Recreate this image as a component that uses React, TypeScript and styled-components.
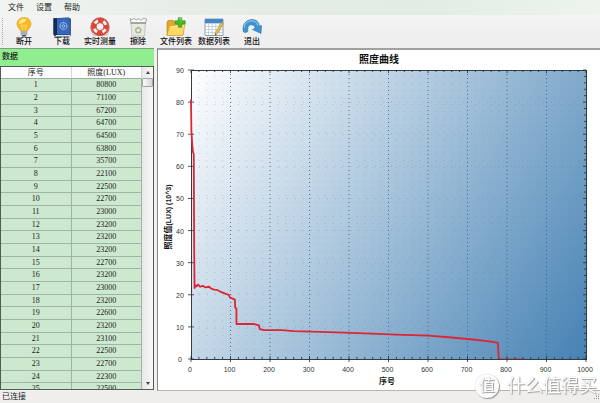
import React from 'react';
import styled, { createGlobalStyle } from 'styled-components';

const GlobalStyle = createGlobalStyle`
  * { box-sizing: border-box; }
  body {
    margin: 0;
    background: #f0f0f0;
    color: #1c1c1c;
    font-family: "Liberation Sans", "Noto Sans CJK SC", sans-serif;
    font-size: 8px;
    line-height: 10px;
  }
`;

const Window = styled.div`
  display: flex;
  flex-direction: column;
  height: 100vh;
  overflow: hidden;
`;

const MenuBar = styled.nav`
  flex: none;
  display: flex;
  align-items: center;
  gap: 12px;
  height: 15px;
  padding: 0 8px;
  background: linear-gradient(90deg, #f1f4f1, #e6ede7 30%, #e3ebe5 70%, #edf4ee);
`;

const MenuItem = styled.button`
  padding: 0;
  border: 0;
  background: none;
  color: inherit;
  font: inherit;
`;

const ToolBar = styled.div`
  flex: none;
  display: flex;
  height: 33px;
  background: linear-gradient(#f3f4f3, #efefef 60%);
`;

const Grip = styled.div`
  width: 2px;
  margin: 3px 1px 3px 2px;
  border-left: 1px dotted #a9a9a9;
`;

const ToolButton = styled.button`
  display: flex;
  flex-direction: column;
  align-items: center;
  width: 38px;
  padding: 2px 0 0;
  border: 0;
  background: none;
  color: #111;
  font: inherit;
  font-weight: 500;
  white-space: nowrap;

  svg {
    display: block;
    width: 20px;
    height: 20px;
  }
`;

const Main = styled.main`
  flex: 1;
  min-height: 0;
  display: flex;
  gap: 3px;
`;

const SidePanel = styled.section`
  flex: none;
  display: flex;
  flex-direction: column;
  width: 154px;
  border-top: 1px solid #7f9f7f;
`;

const PanelTitle = styled.h2`
  flex: none;
  height: 17px;
  margin: 0;
  padding: 3px 2px;
  background: #90ee90;
  font-size: 8px;
  font-weight: 500;
  line-height: 10px;
`;

const GridFrame = styled.div`
  flex: 1;
  min-height: 0;
  display: flex;
  margin-bottom: 1px;
  overflow: hidden;
  border: 1px solid #555a57;
  background: #f0f0f0;
`;

const TableClip = styled.div`
  flex: 1;
  overflow: hidden;
`;

const DataTable = styled.table`
  width: 100%;
  table-layout: fixed;
  border-collapse: separate;
  border-spacing: 0;
  font-family: "Liberation Serif", "Noto Sans CJK SC", serif;
  text-align: center;

  tbody tr:nth-child(3n) td { height: 12px; }
`;

const HeadCell = styled.th`
  height: 12px;
  padding: 0;
  border-right: 1px solid #d4d8d4;
  border-bottom: 1px solid #9aaf9f;
  background: #fbfcfb;
  font-weight: 400;
`;

const Cell = styled.td`
  height: 13px;
  padding: 0;
  border-right: 1px solid #9db5a2;
  border-bottom: 1px solid #9db5a2;
  background: #cce8cf;
`;

const ScrollTrack = styled.div`
  flex: none;
  display: flex;
  flex-direction: column;
  width: 11px;
  background: linear-gradient(90deg, #e6e8e6, #f7f7f7);
`;

const ScrollButton = styled.button`
  display: grid;
  place-items: center;
  height: 11px;
  padding: 0;
  border: 0;
  background: none;

  svg {
    width: 4px;
    height: 3px;
  }
`;

const Thumb = styled.div`
  flex: none;
  height: 9px;
  border: 1px solid #a5a8a6;
  border-radius: 1px;
  background: linear-gradient(90deg, #fafafa, #d4d6d5);
`;

const ThumbSpace = styled.div`
  flex: 1;
`;

const ChartPanel = styled.section`
  flex: 1;
  min-width: 0;
  border-top: 2px solid #a0a0a0;
  border-left: 1px solid #868686;
  border-bottom: 1px solid #b5b5b5;
  background: #fff;

  svg {
    display: block;
    width: 100%;
    height: 100%;
  }
`;

const ChartText = styled.text<{ $bold?: boolean; $size?: number }>`
  fill: ${(p) => (p.$bold ? '#111' : '#333')};
  font-size: ${(p) => p.$size ?? 7}px;
  font-weight: ${(p) => (p.$bold ? 700 : 400)};
  text-anchor: middle;
`;

const StatusBar = styled.footer`
  flex: none;
  display: flex;
  align-items: center;
  justify-content: space-between;
  height: 12px;
  padding: 0 0 0 2px;
  background: #f0eeed;

  svg {
    width: 8px;
    height: 8px;
  }
`;

const Watermark = styled.div`
  position: fixed;
  right: 3px;
  bottom: 5px;
  display: flex;
  align-items: center;
  gap: 8px;
  color: #fff;
  font-size: 18px;
  line-height: 24px;
  text-shadow: 1px 1px 1px #999, 0 0 1px #bbb;
  white-space: nowrap;
  pointer-events: none;
`;

const WatermarkBadge = styled.span`
  width: 24px;
  height: 24px;
  border-radius: 50%;
  background: #fdfdfd;
  box-shadow: 1px 1px 1px #999, 0 0 1px #bbb;
  font-size: 16px;
  text-align: center;
`;

const BulbIcon = () => (
  <svg viewBox="0 0 20 20">
    <path d="M10 .5C5.8.5 3 3.4 3 7c0 3.200 2.500 4.500 3.500 7h7C14.500 11.500 17 10.200 17 7 17 3.400 14.200.5 10 .5Z" fill="#fbb91f" stroke="#dc9a23" strokeWidth=".6" />
    <path d="M9.500 1.800C6.500 2 4.800 4 4.700 6.600c2.600.5 6-.6 7.800-4.100-.9-.5-2-.8-3-.7Z" fill="#ffe68a" />
    <path d="M8.600 13.500 7.700 8l2.300 1.300L12.300 8l-.9 5.500" fill="none" stroke="#f6dc79" strokeWidth=".9" />
    <path d="M6.800 14h6.400v3.600L11.700 19.500H8.300L6.800 17.600Z" fill="#858d94" />
    <path d="M6.800 15h6.400M6.800 17h6.400" stroke="#d9dfe3" strokeWidth=".8" />
    <path d="M8.500 18.800h3" stroke="#434b52" strokeWidth="1.400" />
  </svg>
);

const BookIcon = () => (
  <svg viewBox="0 0 20 20">
    <path d="M1.500 1.200 16.500.5 19 2v16.500l-2 1H3L1.500 18Z" fill="#173874" />
    <path d="M5 1.200 17.200.8v16.800H5Z" fill="#3767b7" />
    <path d="M1.500 1.200H5v17H2.500l-1-1.200Z" fill="#172a55" />
    <path d="M3.500 18h14l.7-1v2H4Z" fill="#dce5ee" />
    <path d="M18 2.500v15" stroke="#7f9bcb" strokeWidth=".7" />
    <circle cx="11.400" cy="9" r="3.500" fill="none" stroke="#8fb6ec" strokeWidth=".9" />
    <circle cx="11.400" cy="9" r="1.300" fill="none" stroke="#b9d5f7" strokeWidth=".8" />
    <path d="M11.400 4.700v2M11.400 11.300v2M7 9h2M13.800 9h2" stroke="#8fb6ec" strokeWidth=".7" />
  </svg>
);

const BuoyIcon = () => (
  <svg viewBox="0 0 20 20">
    <ellipse cx="10" cy="17.500" rx="8.500" ry="1.600" fill="#c7c7c7" />
    <circle cx="10" cy="9.600" r="6.400" fill="none" stroke="#dc4637" strokeWidth="5" />
    <circle cx="10" cy="9.600" r="6" fill="none" stroke="#f7efeb" strokeWidth="3" strokeDasharray="4 5.425" strokeDashoffset="-2.700" />
    <circle cx="10" cy="9.600" r="8.900" fill="none" stroke="#bd3c31" strokeWidth=".7" />
    <circle cx="10" cy="9.600" r="3.900" fill="none" stroke="#ac3b32" strokeWidth=".7" />
    <path d="M2.500 5.500C.4 9 .5 13 2.700 16M17.500 5.500C19.600 9 19.500 13 17.300 16" fill="none" stroke="#d56353" strokeWidth="1" />
  </svg>
);

const EraseIcon = () => (
  <svg viewBox="0 0 20 20">
    <path d="M3 5h14.500L16.500 19H4Z" fill="#e7e9e4" stroke="#b2b5af" strokeWidth=".7" />
    <path d="m2 1.500 2 1.500 2-2 2 2 3-1.500 2 2 2-2.500 3.500 1-1 4H3Z" fill="#f8f8f6" stroke="#92968f" strokeWidth=".8" />
    <path d="M2.500 6H18" stroke="#8b8e87" strokeWidth="1.200" />
    <path d="M10.200 10.200 13 12.500l-1 3H8.500L7.400 12.600Z" fill="none" stroke="#a7ba85" strokeWidth="1.400" />
  </svg>
);

const FolderIcon = () => (
  <svg viewBox="0 0 20 20">
    <path d="M1 5.500V18h16V5.500H9L7.500 3.500H2Z" fill="#e9a52b" stroke="#bf8123" strokeWidth=".7" />
    <path d="M3.500 9 19 7l-2.200 11.500H1Z" fill="#ffda61" stroke="#d29b2f" strokeWidth=".7" />
    <path d="M4.200 10 17.500 8.300" stroke="#fff3a9" strokeWidth=".9" />
    <path d="M12.300.8h3.500v3h3.400V7h-3.400v3.200h-3.500V7H9V3.800h3.300Z" fill="#42bd28" stroke="#288d22" strokeWidth=".6" />
    <path d="M13 1.500h2v3" fill="none" stroke="#a1ea77" strokeWidth=".7" />
  </svg>
);

const TableIcon = () => (
  <svg viewBox="0 0 20 20">
    <path d="M1 2h18v16.500H1Z" fill="#fff" stroke="#6f8da8" strokeWidth=".8" />
    <path d="M1 2h18v4H1Z" fill="#4387c8" />
    <path d="M1 6.500h18M1 9.500h18M1 12.500h18M1 15.500h18M4.600 6v12M8.200 6v12M11.800 6v12M15.400 6v12" stroke="#a3b8cc" strokeWidth=".6" />
    <path d="m17.500 5.500 2 1-6.100 10-2.400 2 .4-3Z" fill="#f2c33d" stroke="#a87a30" strokeWidth=".6" />
    <path d="m11.300 16.500-.3 2 1.600-1.200Z" fill="#4b402c" />
  </svg>
);

const ExitIcon = () => (
  <svg viewBox="0 0 20 20">
    <path d="M1.500 15C-.5 8 4 2.500 10 2.500c4.300 0 7 2.600 7.300 6.500l2.200-.5-.5 8-8.500-4 2.700-1.200c-.4-2.300-1.700-3.500-3.700-3.500-3 0-4.200 2.700-3.700 6.700-1.400 1-3 1.200-4.300.5Z" fill="#3d95cf" stroke="#2773ab" strokeWidth=".6" />
    <path d="M2.300 11C2 6.800 5.300 3.800 9.700 3.800c3.400 0 5.500 1.700 6 4.700" fill="none" stroke="#99d3ef" strokeWidth="1" />
  </svg>
);

const tools: { label: string; Icon: React.FC }[] = [
  { label: '断开', Icon: BulbIcon },
  { label: '下载', Icon: BookIcon },
  { label: '实时测量', Icon: BuoyIcon },
  { label: '擦除', Icon: EraseIcon },
  { label: '文件列表', Icon: FolderIcon },
  { label: '数据列表', Icon: TableIcon },
  { label: '退出', Icon: ExitIcon },
];

const readings = [
  80800, 71100, 67200, 64700, 64500, 63800, 35700, 22100, 22500, 22700, 23000, 23200, 23200,
  23200, 22700, 23200, 23000, 23200, 22600, 23200, 23100, 22500, 22700, 22300, 22500,
];

const curve: [number, number][] = [
  [0, 80.8], [1, 71], [3, 67], [5, 64.5], [7, 63.8], [8, 35.7], [9, 22.1], [11, 23], [14, 22.6],
  [18, 23.2], [23, 22.5], [30, 22.8], [36, 22.3], [46, 22.5], [50, 22], [58, 21.6], [66, 21.5],
  [74, 21], [82, 20.6], [90, 20.2], [96, 20], [98, 19.2], [104, 18.9], [111, 18.5], [112, 16],
  [115, 15.6], [115, 10.9], [160, 10.9], [172, 10.5], [174, 9.3], [185, 9], [230, 9], [260, 8.7],
  [350, 8.4], [440, 8], [520, 7.6], [600, 7.3], [660, 6.7], [720, 6], [760, 5.4], [777, 5],
  [779, 0],
];

const PLOT = { left: 33, top: 20, width: 395, height: 289 };
const px = (x: number) => PLOT.left + (x / 1000) * PLOT.width;
const py = (y: number) => PLOT.top + PLOT.height - (y / 90) * PLOT.height;
const steps = (count: number) => Array.from({ length: count }, (_, i) => i);

const Chart = () => {
  const right = PLOT.left + PLOT.width;
  const bottom = PLOT.top + PLOT.height;
  return (
    <svg viewBox="0 0 442 340" role="img" aria-label="照度曲线">
      <defs>
        <linearGradient id="sky" gradientUnits="userSpaceOnUse" x1="33" y1="20" x2="444" y2="284">
          <stop offset="0" stopColor="#ffffff" />
          <stop offset="1" stopColor="#4682b4" />
        </linearGradient>
      </defs>
      <ChartText $bold $size={10} x={221} y={13}>照度曲线</ChartText>
      <rect x={PLOT.left} y={PLOT.top} width={PLOT.width} height={PLOT.height} fill="url(#sky)" />
      {steps(51).filter((i) => i % 5).map((i) => (
        <path key={i} d={`M${px(i * 20)} ${PLOT.top + 6}V${bottom}`} stroke="#5f7890" strokeOpacity=".3" strokeDasharray="1 6" />
      ))}
      {steps(9).slice(1).map((i) => (
        <path key={i} d={`M${PLOT.left} ${py(i * 10)}H${right}`} stroke="#5f7890" strokeOpacity=".3" strokeDasharray="1 7" />
      ))}
      {steps(10).slice(1).map((i) => (
        <path key={i} d={`M${px(i * 100)} ${PLOT.top}V${bottom}`} stroke="#30506e" strokeOpacity=".75" strokeDasharray="1 3" />
      ))}
      <rect x={PLOT.left} y={PLOT.top} width={PLOT.width} height={PLOT.height} fill="none" stroke="#303d45" shapeRendering="crispEdges" />
      {steps(51).map((i) => (
        <path
          key={i}
          d={`M${px(i * 20)} ${PLOT.top}v${i % 5 ? 2 : 3}M${px(i * 20)} ${bottom + (i % 5 ? 0 : 3)}V${bottom - (i % 5 ? 2 : 3)}`}
          stroke="#252d33"
          strokeWidth=".8"
        />
      ))}
      {steps(46).map((i) => (
        <path
          key={i}
          d={`M${PLOT.left - (i % 5 ? 0 : 3)} ${py(i * 2)}H${PLOT.left + (i % 5 ? 1 : 3)}M${right} ${py(i * 2)}h${i % 5 ? -2 : -3}`}
          stroke="#252d33"
          strokeWidth=".8"
        />
      ))}
      <polyline
        points={curve.map(([x, y]) => `${px(x)},${py(y)}`).join(' ')}
        fill="none"
        stroke="#dc2634"
        strokeWidth="1.8"
        strokeLinejoin="round"
      />
      <path d={`M${px(779)} ${bottom}H${px(845)}`} stroke="#a02530" strokeOpacity=".7" />
      {steps(11).map((i) => (
        <ChartText key={i} x={px(i * 100) - 1} y={bottom + 13}>{i * 100}</ChartText>
      ))}
      {steps(10).map((i) => (
        <ChartText key={i} x={22} y={py(i * 10) + 3}>{i * 10}</ChartText>
      ))}
      <ChartText $bold $size={8} x={229} y={334}>序号</ChartText>
      <ChartText $bold transform="translate(13 167) rotate(-90)">
        <tspan fontSize="8">照度值</tspan>(LUX) (10^3)
      </ChartText>
    </svg>
  );
};

export default function App() {
  return (
    <>
      <GlobalStyle />
      <Window>
        <MenuBar>
          <MenuItem>文件</MenuItem>
          <MenuItem>设置</MenuItem>
          <MenuItem>帮助</MenuItem>
        </MenuBar>
        <ToolBar role="toolbar">
          <Grip />
          {tools.map(({ label, Icon }) => (
            <ToolButton key={label}>
              <Icon />
              {label}
            </ToolButton>
          ))}
        </ToolBar>
        <Main>
          <SidePanel>
            <PanelTitle>数据</PanelTitle>
            <GridFrame>
              <TableClip>
                <DataTable>
                  <thead>
                    <tr>
                      <HeadCell>序号</HeadCell>
                      <HeadCell>照度(LUX)</HeadCell>
                    </tr>
                  </thead>
                  <tbody>
                    {readings.map((value, i) => (
                      <tr key={i}>
                        <Cell>{i + 1}</Cell>
                        <Cell>{value}</Cell>
                      </tr>
                    ))}
                  </tbody>
                </DataTable>
              </TableClip>
              <ScrollTrack>
                <ScrollButton aria-label="向上">
                  <svg viewBox="0 0 4 3"><path d="M0 3 2 0l2 3Z" fill="#444" /></svg>
                </ScrollButton>
                <Thumb />
                <ThumbSpace />
                <ScrollButton aria-label="向下">
                  <svg viewBox="0 0 4 3"><path d="m0 0 2 3 2-3Z" fill="#444" /></svg>
                </ScrollButton>
              </ScrollTrack>
            </GridFrame>
          </SidePanel>
          <ChartPanel>
            <Chart />
          </ChartPanel>
        </Main>
        <StatusBar>
          已连接
          <svg viewBox="0 0 8 8">
            <path d="M6 1h1v1H6ZM4 3h1v1H4ZM6 3h1v1H6ZM2 5h1v1H2ZM4 5h1v1H4ZM6 5h1v1H6Z" fill="#999" />
          </svg>
        </StatusBar>
      </Window>
      <Watermark>
        <WatermarkBadge>值</WatermarkBadge>
        什么值得买
      </Watermark>
    </>
  );
}
